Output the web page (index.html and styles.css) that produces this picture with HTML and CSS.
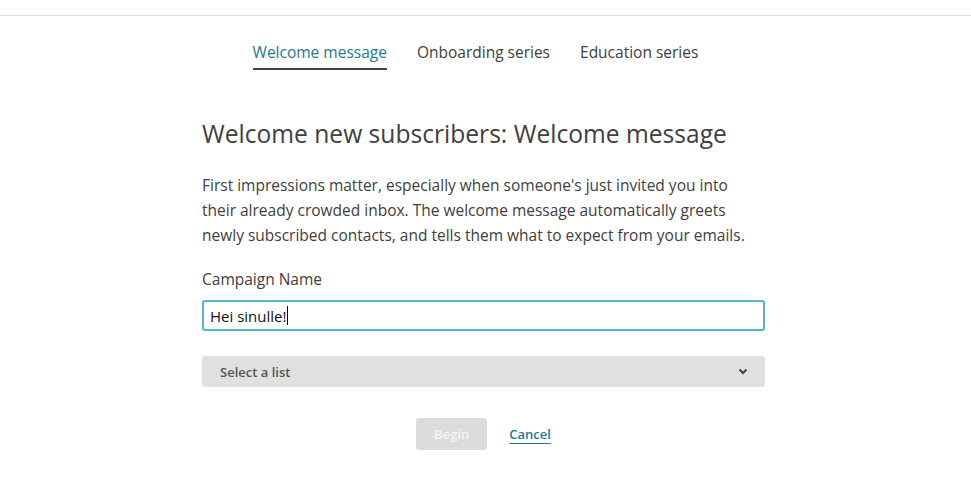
FILE: index.html
```html
<!DOCTYPE html>
<html>
<head>
<meta charset="utf-8">
<link rel="stylesheet" href="styles.css">
</head>
<body>
<div class="topbar"></div>
<nav class="tabs">
  <a class="tab active">Welcome message</a>
  <a class="tab">Onboarding series</a>
  <a class="tab">Education series</a>
</nav>
<main class="content">
  <h1 class="title">Welcome new subscribers: Welcome message</h1>
  <p class="intro">First impressions matter, especially when someone's just invited you into their already crowded inbox. The welcome message automatically greets newly subscribed contacts, and tells them what to expect from your emails.</p>
  <label class="label">Campaign Name</label>
  <div class="input"><span class="value">Hei sinulle!</span><span class="caret"></span></div>
  <div class="select">
    <span>Select a list</span>
    <svg class="chev" width="10" height="7" viewBox="0 0 10 7"><path d="M1.5 1.5 L5 5 L8.5 1.5" fill="none" stroke="#444" stroke-width="2"/></svg>
  </div>
  <div class="actions">
    <button class="begin">Begin</button>
    <a class="cancel">Cancel</a>
  </div>
</main>
</body>
</html>
```
FILE: styles.css
```css
html, body {
  margin: 0;
  padding: 0;
  background: #fff;
  font-family: "Open Sans", "Liberation Sans", sans-serif;
  color: #404040;
}
.topbar {
  height: 15px;
  border-bottom: 1px solid #dcdcdc;
}
.tabs {
  display: flex;
  justify-content: center;
  gap: 30px;
  padding-top: 25px;
  padding-right: 20px;
}
.tab {
  font-size: 15.5px;
  line-height: 22px;
  color: #404040;
  padding-bottom: 5px;
  border-bottom: 2px solid transparent;
}
.tab.active {
  color: #237a8c;
  border-bottom-color: #444;
}
.content {
  width: 563px;
  margin: 0 auto;
  padding-right: 4px;
}
.title {
  font-size: 24.6px;
  font-weight: 400;
  line-height: 32px;
  margin: 48px 0 0;
  color: #404040;
}
.intro {
  font-size: 15.5px;
  line-height: 25px;
  margin: 23px 0 0;
  color: #404040;
}
.label {
  display: block;
  font-size: 15.5px;
  line-height: 22px;
  margin-top: 20px;
}
.input {
  margin-top: 10px;
  height: 31px;
  box-sizing: border-box;
  border: 2px solid #52b6cf;
  border-radius: 3px;
  display: flex;
  align-items: center;
  padding: 0 6px;
  font-size: 15px;
  color: #111;
}
.value { font-family: "Open Sans", sans-serif; }
.caret {
  display: inline-block;
  width: 1px;
  height: 19px;
  background: #000;
  margin-left: 1px;
}
.select {
  margin-top: 25px;
  height: 31px;
  background: #e0e0e0;
  border-radius: 3px;
  display: flex;
  align-items: center;
  justify-content: space-between;
  padding: 0 17px 0 18px;
  font-size: 13px;
  font-weight: 600;
  color: #555;
}
.actions {
  display: flex;
  justify-content: center;
  align-items: center;
  gap: 22px;
  margin-top: 31px;
}
.begin {
  width: 71px;
  height: 32px;
  border: none;
  border-radius: 3px;
  background: #dcdcdc;
  color: #f4f4f4;
  font-family: "Open Sans", sans-serif;
  font-size: 13px;
  font-weight: 600;
}
.cancel {
  font-size: 13px;
  font-weight: 600;
  color: #237a8c;
  text-decoration: underline;
  text-underline-offset: 4px;
}
```
